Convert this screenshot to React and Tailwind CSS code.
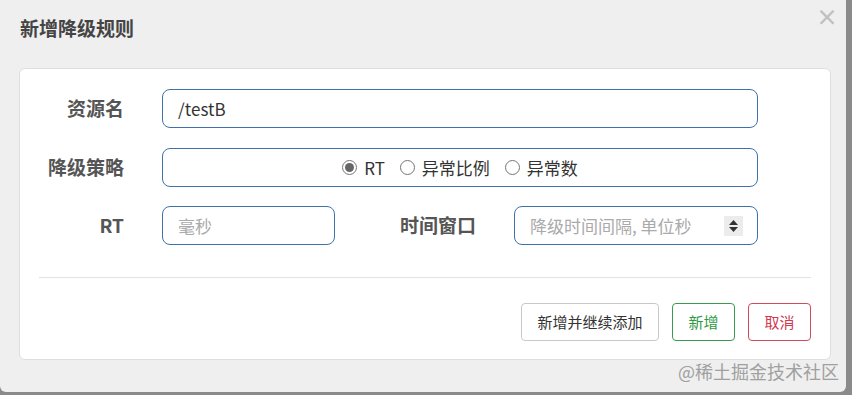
import React from "react";

const font = { fontFamily: '"Microsoft YaHei", "Noto Sans CJK SC", "Liberation Sans", sans-serif' };

function Radio({ checked, label }) {
  return (
    <label className="flex items-center gap-[7px] text-[17px] text-[#333]">
      <span className="w-[15px] h-[15px] rounded-full border border-[#777] bg-white flex items-center justify-center">
        {checked && <span className="w-[9px] h-[9px] rounded-full bg-[#666]" />}
      </span>
      <span>{label}</span>
    </label>
  );
}

export default function App() {
  return (
    <div className="w-[852px] h-[395px] bg-[#8a8a8a] overflow-hidden" style={font}>
      <div className="w-[846px] h-[392px] bg-[#efefef] rounded-b-[6px] relative flex flex-col">
        <div className="h-[68px] flex items-start pt-[17px] pl-[20px]">
          <h2 className="text-[19px] font-bold text-[#444] leading-[22px]">新增降级规则</h2>
        </div>
        <button className="absolute left-[816px] top-[4px] text-[#c0c0c0] text-[22px] leading-none font-bold">
          ×
        </button>
        <div className="ml-[19px] w-[812px] h-[292px] bg-white border border-[#dedede] rounded-[6px] pl-[19px] pr-[19px] pt-[20px]">
          <div className="flex items-center h-[39px]">
            <div className="w-[85px] text-right text-[19px] font-bold text-[#555]">资源名</div>
            <div className="ml-[38px] w-[596px] h-[39px] border border-[#3f72a8] rounded-[8px] flex items-center px-[15px] text-[17px] text-[#333]">
              /testB
            </div>
          </div>
          <div className="flex items-center h-[39px] mt-[20px]">
            <div className="w-[85px] text-right text-[19px] font-bold text-[#555]">降级策略</div>
            <div className="ml-[38px] w-[596px] h-[39px] border border-[#3f72a8] rounded-[8px] flex items-center justify-center gap-[15px]">
              <Radio checked label="RT" />
              <Radio label="异常比例" />
              <Radio label="异常数" />
            </div>
          </div>
          <div className="flex items-center h-[39px] mt-[19px]">
            <div className="w-[85px] text-right text-[19px] font-bold text-[#555]">RT</div>
            <div className="ml-[38px] w-[173px] h-[39px] border border-[#3f72a8] rounded-[8px] flex items-center px-[15px] text-[17px] text-[#aaa]">
              毫秒
            </div>
            <div className="w-[141px] text-right text-[19px] font-bold text-[#555]">时间窗口</div>
            <div className="ml-[38px] w-[244px] h-[39px] border border-[#3f72a8] rounded-[8px] flex items-center pl-[15px] pr-[14px] text-[17px] text-[#aaa]">
              <span className="flex-1">降级时间间隔, 单位秒</span>
              <span className="w-[19px] h-[20px] bg-[#ececec] flex flex-col items-center justify-center gap-[2px]">
                <svg width="9" height="5" viewBox="0 0 9 5"><path d="M0 5 L4.5 0 L9 5 Z" fill="#333" /></svg>
                <svg width="9" height="5" viewBox="0 0 9 5"><path d="M0 0 L4.5 5 L9 0 Z" fill="#333" /></svg>
              </span>
            </div>
          </div>
          <div className="mt-[32px] border-t border-[#e3e3e3]" />
          <div className="flex justify-end gap-[13px] mt-[25px]">
            <button className="w-[138px] h-[38px] border border-[#c8c8c8] rounded-[4px] text-[15px] text-[#333] bg-white">
              新增并继续添加
            </button>
            <button className="w-[63px] h-[38px] border border-[#3a9a4d] rounded-[4px] text-[15px] text-[#2f9a45] bg-white">
              新增
            </button>
            <button className="w-[63px] h-[38px] border border-[#d24a5c] rounded-[4px] text-[15px] text-[#d2384f] bg-white">
              取消
            </button>
          </div>
        </div>
        <div className="absolute left-[678px] top-[359px] text-[18px] text-[#a0a0a0] leading-[24px]">
          @稀土掘金技术社区
        </div>
      </div>
    </div>
  );
}
